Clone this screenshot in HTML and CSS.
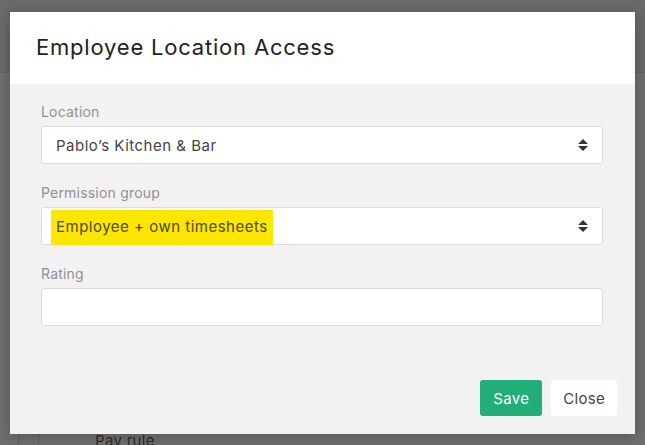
FILE: index.html
```html
<!DOCTYPE html>
<html>
	<head>
		<title>Employee Location Access</title>
		<link rel="stylesheet" href="styles.css">
	</head>
	<body>
		<div id="page">
			<div class="page-header"></div>
			<div class="page-content">
				<div class="table-row">
					<span class="cell-a"></span>
					<span class="cell-b"></span>
					<span class="cell-text">Pay rule</span>
				</div>
			</div>
		</div>
		<div id="backdrop">
			<div class="modal">
				<div class="modal-header">
					<h2>Employee Location Access</h2>
				</div>
				<div class="modal-body">
					<div class="field">
						<label>Location</label>
						<div class="select">
							<span class="value">Pablo’s Kitchen &amp; Bar</span>
							<svg class="arrows" width="10" height="12" viewBox="0 0 10 12"><path d="M5 0 L10 5 L0 5 Z M0 7 L10 7 L5 12 Z" fill="#333"/></svg>
						</div>
					</div>
					<div class="field">
						<label>Permission group</label>
						<div class="select">
							<span class="value"><mark>Employee + own timesheets</mark></span>
							<svg class="arrows" width="10" height="12" viewBox="0 0 10 12"><path d="M5 0 L10 5 L0 5 Z M0 7 L10 7 L5 12 Z" fill="#333"/></svg>
						</div>
					</div>
					<div class="field">
						<label>Rating</label>
						<input type="text" class="input">
					</div>
				</div>
				<div class="modal-footer">
					<button class="btn btn-save">Save</button>
					<button class="btn btn-close">Close</button>
				</div>
			</div>
		</div>
	</body>
</html>
```

FILE: styles.css
```css
* {
	box-sizing: border-box;
}

body {
	margin: 0;
	font-family: Inter, "Noto Sans", sans-serif;
	overflow: hidden;
	height: 445px;
}

#page {
	height: 445px;
	background: #6f6f6f;
}

.page-header {
	height: 73px;
	background: #6a6a6a;
	border-bottom: 1px solid #626262;
}

.page-content {
	padding-top: 352px;
}

.table-row {
	display: flex;
	height: 40px;
	margin-left: 18px;
	border-left: 1px solid #5e5e5e;
}

.cell-a {
	width: 20px;
	border-right: 1px solid #5e5e5e;
}

.cell-b {
	width: 56px;
}

.cell-text {
	padding-top: 6px;
	font-size: 15px;
	line-height: 20px;
	color: #2c2c2c;
	letter-spacing: 0.3px;
}

#backdrop {
	position: fixed;
	top: 0;
	left: 0;
	right: 0;
	bottom: 0;
	padding: 12px 10px;
}

.modal {
	width: 625px;
	box-shadow: 0 2px 14px rgba(0, 0, 0, 0.25);
}

.modal-header {
	height: 72px;
	background: #fff;
	padding: 21px 26px 0;
}

.modal-header h2 {
	margin: 0;
	font-weight: 400;
	font-size: 22px;
	line-height: 28px;
	letter-spacing: 0.8px;
	color: #222;
}

.modal-body {
	background: #f2f2f2;
	padding: 18px 32px 35px 31px;
}

.field {
	margin-bottom: 19px;
}

.field label {
	display: block;
	font-size: 14px;
	line-height: 20px;
	color: #919191;
	margin-bottom: 4px;
	letter-spacing: 0.2px;
}

.select, .input {
	display: flex;
	align-items: center;
	width: 100%;
	height: 38px;
	background: #fff;
	border: 1px solid #dcdcdc;
	border-radius: 3px;
	padding: 0 14px;
	font-size: 15px;
	letter-spacing: 0.5px;
	color: #444;
}

.select .value {
	flex: 1;
}

.select mark {
	background: #ffe600;
	color: #4a4a1c;
	padding: 7px 5px 9px;
	margin-left: -5px;
}

.arrows {
	display: block;
}

.modal-footer {
	display: flex;
	justify-content: flex-end;
	gap: 9px;
	background: #f2f2f2;
	padding: 0 18px 18px;
}

.btn {
	height: 36px;
	border: none;
	border-radius: 3px;
	padding: 0 13px;
	font-family: Inter, "Noto Sans", sans-serif;
	font-size: 15px;
	letter-spacing: 0.3px;
}

.btn-save {
	background: #22ad79;
	color: #fff;
}

.btn-close {
	background: #fff;
	color: #444;
	padding: 0 12px;
}
```
